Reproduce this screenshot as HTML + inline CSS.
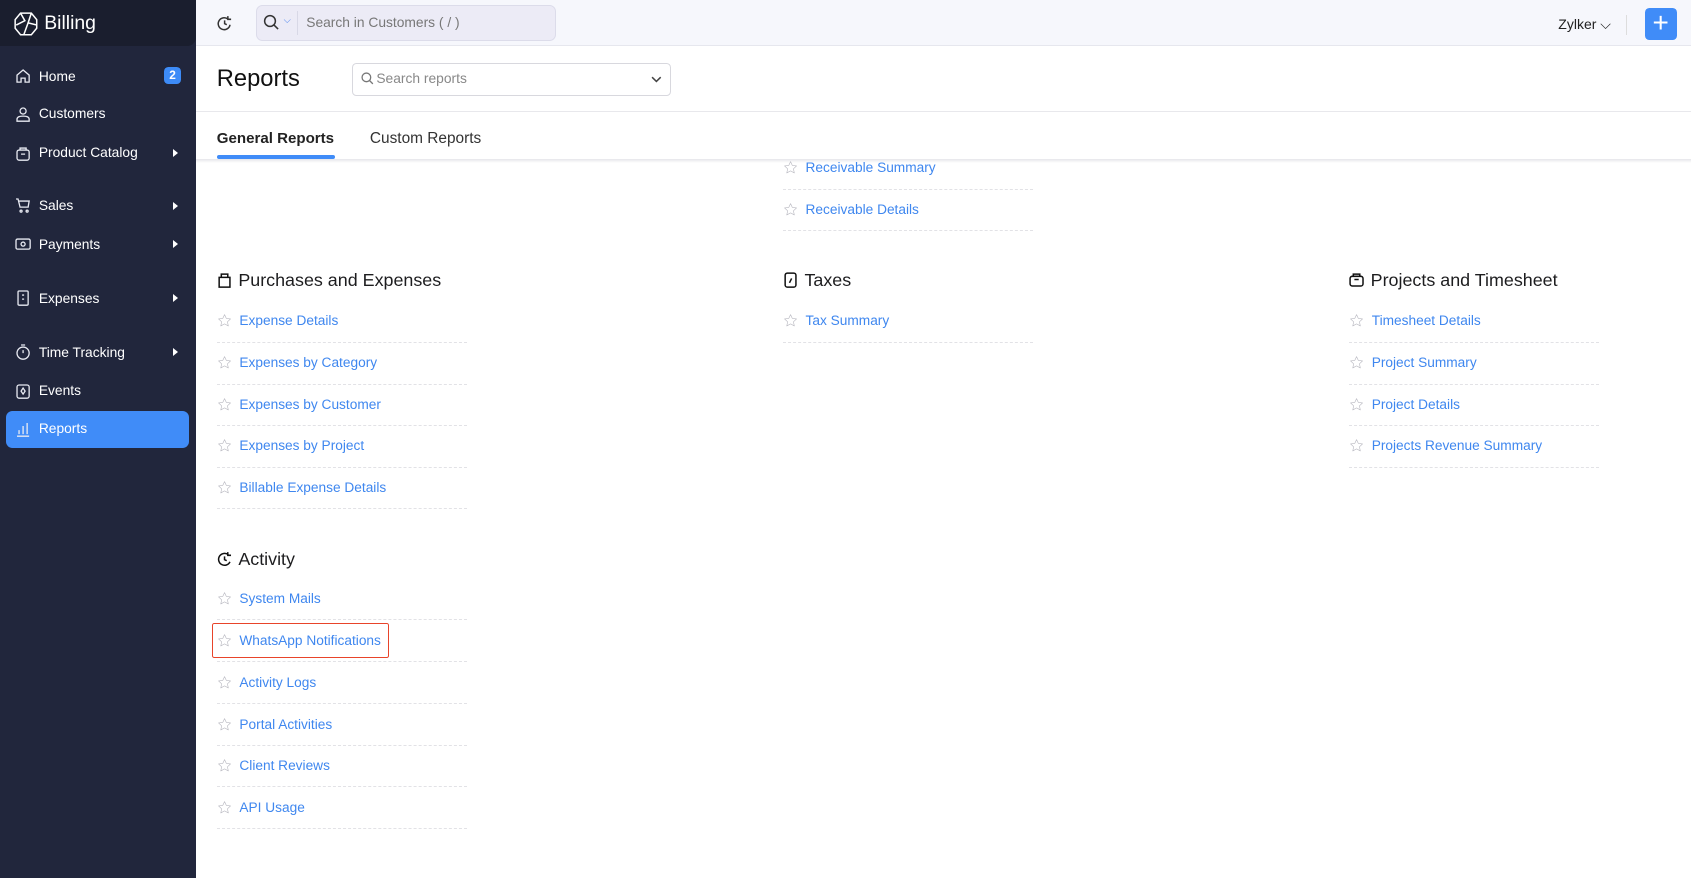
<!DOCTYPE html>
<html><head><meta charset="utf-8">
<style>
*{box-sizing:border-box;margin:0;padding:0}
html,body{width:1691px;height:878px;overflow:hidden;background:#fff}
body{font-family:"Liberation Sans",sans-serif}
#root{zoom:1.0784;width:1568px;height:814px;position:relative;overflow:hidden}
.abs{position:absolute}
#side{left:0;top:0;width:182px;height:814px;background:#21263c}
#logo{left:0;top:0;width:182px;height:43px;background:#1a1e2e;border-bottom-right-radius:8px}
.nav{position:absolute;left:14px;color:#fff;font-size:12.8px;display:flex;align-items:center;gap:7px}
.nav svg{width:15px;height:15px;stroke:#e8eaf2;fill:none;stroke-width:1.3}
.arr{position:absolute;left:160px;width:0;height:0;border-left:5px solid #fff;border-top:4px solid transparent;border-bottom:4px solid transparent}
#top{left:182px;top:0;width:1386px;height:43px;background:#f6f7fc;border-bottom:1px solid #e6e7ee}
.hl{position:absolute;height:1px;border-top:1px dashed #e2e2e6;width:232px}
.it{position:absolute;font-size:12.7px;color:#3f87ef;display:flex;align-items:center;gap:7px;white-space:nowrap}
.it svg{width:14px;height:14px;fill:none;stroke:#b8b8c0;stroke-width:1}
.h{position:absolute;font-size:16.6px;color:#1d1d1f;display:flex;align-items:center;gap:6px}
.h svg{width:14px;height:15px;fill:none;stroke:#111;stroke-width:1.4}
</style></head><body><div id="root">
<svg width="0" height="0" style="position:absolute"><defs><symbol id="star" viewBox="0 0 24 24"><path d="M12 2.5l2.9 6.2 6.7.7-5 4.6 1.4 6.6L12 17.3l-6 3.3 1.4-6.6-5-4.6 6.7-.7z" stroke-linejoin="round"/></symbol></defs></svg>
<div id="side" class="abs"></div>
<div id="logo" class="abs">
<svg class="abs" style="left:12px;top:10px" width="24" height="24" viewBox="0 0 24 24" fill="none" stroke="#fff" stroke-width="1.4"><path d="M7 2h10l5 6v8l-5 6H7l-5-6V8z"/><path d="M7 2l4 7-8 4M17 2l-3 9 8 2M10 22l4-11"/></svg>
<div class="abs" style="left:41px;top:11px;color:#fff;font-size:18px">Billing</div></div>
<div class="nav" style="top:63px"><svg viewBox="0 0 16 16"><path d="M2 7l6-5 6 5v7H10v-4H6v4H2z"/></svg>Home</div>
<div class="abs" style="left:152px;top:62px;width:16px;height:16px;border-radius:4px;background:#3d8bf7;color:#fff;font-size:11px;font-weight:bold;text-align:center;line-height:16px">2</div>
<div class="nav" style="top:98px"><svg viewBox="0 0 16 16"><circle cx="8" cy="5" r="3"/><path d="M2 15v-2c0-2 2-3 6-3s6 1 6 3v2z"/></svg>Customers</div>
<div class="nav" style="top:134px"><svg viewBox="0 0 16 16"><rect x="2" y="5" width="12" height="10" rx="2"/><path d="M5 5V3h6v2M6 9h4"/></svg>Product Catalog</div><div class="arr" style="top:138px"></div>
<div class="nav" style="top:183px"><svg viewBox="0 0 16 16"><path d="M1 2h2l2 8h8l1-6H4"/><circle cx="6" cy="14" r="1"/><circle cx="12" cy="14" r="1"/></svg>Sales</div><div class="arr" style="top:187px"></div>
<div class="nav" style="top:219px"><svg viewBox="0 0 16 16"><rect x="1" y="3" width="14" height="10" rx="1.5"/><circle cx="8" cy="8" r="2"/></svg>Payments</div><div class="arr" style="top:223px"></div>
<div class="nav" style="top:269px"><svg viewBox="0 0 16 16"><rect x="3" y="1" width="10" height="14" rx="1"/><path d="M7 5h2M7 9h2"/></svg>Expenses</div><div class="arr" style="top:273px"></div>
<div class="nav" style="top:319px"><svg viewBox="0 0 16 16"><circle cx="8" cy="9" r="6"/><path d="M8 9V6M6 1h4"/></svg>Time Tracking</div><div class="arr" style="top:323px"></div>
<div class="nav" style="top:355px"><svg viewBox="0 0 16 16"><rect x="2" y="2" width="12" height="13" rx="2"/><path d="M8 5l2 3-2 3-2-3z"/></svg>Events</div>
<div class="abs" style="left:6px;top:381px;width:169px;height:34px;border-radius:6px;background:#408cf8"></div>
<div class="nav" style="top:390px"><svg viewBox="0 0 16 16"><path d="M2 15h12M4 13V9M8 13V5M12 13V2"/></svg>Reports</div>
<div id="top" class="abs"></div>
<svg class="abs" style="left:200px;top:14px" width="16" height="16" viewBox="0 0 16 16" fill="none" stroke="#333" stroke-width="1.4"><path d="M13 9a5.5 5.5 0 1 1-2-5.2M11 1v3h3M8 5v3l2 1"/></svg>
<div class="abs" style="left:237px;top:5px;width:279px;height:33px;border:1px solid #dcdcea;border-radius:6px;background:#ecebf6"></div>
<svg class="abs" style="left:244px;top:13px" width="16" height="16" viewBox="0 0 16 16" fill="none" stroke="#333" stroke-width="1.4"><circle cx="6.5" cy="6.5" r="5"/><path d="M10 10l4 4"/></svg>
<div class="abs" style="left:263px;top:14px;color:#5a8ef0;font-size:9px">⌵</div>
<div class="abs" style="left:275px;top:10px;width:1px;height:22px;background:#d8d8e6"></div>
<div class="abs" style="left:284px;top:14px;font-size:12.8px;color:#777">Search in Customers ( / )</div>
<div class="abs" style="left:1445px;top:15px;font-size:13px;color:#222">Zylker ⌵</div>
<div class="abs" style="left:1508px;top:14px;width:1px;height:18px;background:#ddd"></div>
<div class="abs" style="left:1525px;top:7px;width:30px;height:30px;border-radius:4px;background:#408cf8;color:#fff;font-size:26px;line-height:28px;text-align:center;font-weight:300">+</div>
<div class="abs" style="left:201px;top:61px;font-size:22px;color:#111">Reports</div>
<div class="abs" style="left:326px;top:58px;width:296px;height:31px;border:1px solid #d8d8de;border-radius:4px"></div>
<svg class="abs" style="left:335px;top:67px" width="12" height="12" viewBox="0 0 12 12" fill="none" stroke="#777" stroke-width="1.2"><circle cx="5" cy="5" r="4"/><path d="M8 8l3 3"/></svg>
<div class="abs" style="left:349px;top:66px;font-size:12.8px;color:#888">Search reports</div>
<svg class="abs" style="left:604px;top:70px" width="10" height="8" viewBox="0 0 10 8" fill="none" stroke="#444" stroke-width="1.4"><path d="M1 2l4 4 4-4"/></svg>
<div class="abs" style="left:182px;top:103px;width:1386px;height:1px;background:#e8e8ec"></div>
<div class="abs" style="left:201px;top:121px;font-size:14px;color:#222;font-weight:bold">General Reports</div>
<div class="abs" style="left:201px;top:144px;width:110px;height:3px;background:#408cf8;border-radius:2px"></div>
<div class="abs" style="left:343px;top:121px;font-size:14.3px;color:#333">Custom Reports</div>
<div class="abs" style="left:182px;top:147px;width:1386px;height:4px;background:linear-gradient(#e6e6ea,#fff)"></div>

<div class="it" style="left:726px;top:148px"><svg><use href="#star"/></svg>Receivable Summary</div><div class="hl" style="left:726px;top:175px"></div>
<div class="it" style="left:726px;top:187px"><svg><use href="#star"/></svg>Receivable Details</div><div class="hl" style="left:726px;top:213px"></div>

<div class="h" style="left:201px;top:250px"><svg viewBox="0 0 14 15"><path d="M2 5h10v9H2zM4 5V2h6v3"/></svg>Purchases and Expenses</div>
<div class="it" style="left:201px;top:290px"><svg><use href="#star"/></svg>Expense Details</div><div class="hl" style="left:201px;top:317px"></div>
<div class="it" style="left:201px;top:329px"><svg><use href="#star"/></svg>Expenses by Category</div><div class="hl" style="left:201px;top:356px"></div>
<div class="it" style="left:201px;top:368px"><svg><use href="#star"/></svg>Expenses by Customer</div><div class="hl" style="left:201px;top:394px"></div>
<div class="it" style="left:201px;top:406px"><svg><use href="#star"/></svg>Expenses by Project</div><div class="hl" style="left:201px;top:433px"></div>
<div class="it" style="left:201px;top:445px"><svg><use href="#star"/></svg>Billable Expense Details</div><div class="hl" style="left:201px;top:471px"></div>

<div class="h" style="left:726px;top:250px"><svg viewBox="0 0 14 15"><rect x="2" y="1" width="10" height="13" rx="2"/><path d="M6 10l2-4"/></svg>Taxes</div>
<div class="it" style="left:726px;top:290px"><svg><use href="#star"/></svg>Tax Summary</div><div class="hl" style="left:726px;top:317px"></div>

<div class="h" style="left:1251px;top:250px"><svg viewBox="0 0 14 15"><rect x="1" y="4" width="12" height="9" rx="2"/><path d="M4 4V2h6v2M5 7h4"/></svg>Projects and Timesheet</div>
<div class="it" style="left:1251px;top:290px"><svg><use href="#star"/></svg>Timesheet Details</div><div class="hl" style="left:1251px;top:317px"></div>
<div class="it" style="left:1251px;top:329px"><svg><use href="#star"/></svg>Project Summary</div><div class="hl" style="left:1251px;top:356px"></div>
<div class="it" style="left:1251px;top:368px"><svg><use href="#star"/></svg>Project Details</div><div class="hl" style="left:1251px;top:394px"></div>
<div class="it" style="left:1251px;top:406px"><svg><use href="#star"/></svg>Projects Revenue Summary</div><div class="hl" style="left:1251px;top:433px"></div>

<div class="h" style="left:201px;top:509px"><svg viewBox="0 0 14 15"><path d="M12 10a5.5 5.5 0 1 1-1.5-6.5M10 1v3h3M7 5v3l2 1"/></svg>Activity</div>
<div class="it" style="left:201px;top:548px"><svg><use href="#star"/></svg>System Mails</div><div class="hl" style="left:201px;top:574px"></div>
<div class="abs" style="left:197px;top:578px;width:164px;height:32px;border:1.5px solid #e8442a;border-radius:2px"></div>
<div class="it" style="left:201px;top:587px"><svg><use href="#star"/></svg>WhatsApp Notifications</div><div class="hl" style="left:201px;top:613px"></div>
<div class="it" style="left:201px;top:626px"><svg><use href="#star"/></svg>Activity Logs</div><div class="hl" style="left:201px;top:652px"></div>
<div class="it" style="left:201px;top:665px"><svg><use href="#star"/></svg>Portal Activities</div><div class="hl" style="left:201px;top:691px"></div>
<div class="it" style="left:201px;top:703px"><svg><use href="#star"/></svg>Client Reviews</div><div class="hl" style="left:201px;top:729px"></div>
<div class="it" style="left:201px;top:742px"><svg><use href="#star"/></svg>API Usage</div><div class="hl" style="left:201px;top:768px"></div>
</div></body></html>
